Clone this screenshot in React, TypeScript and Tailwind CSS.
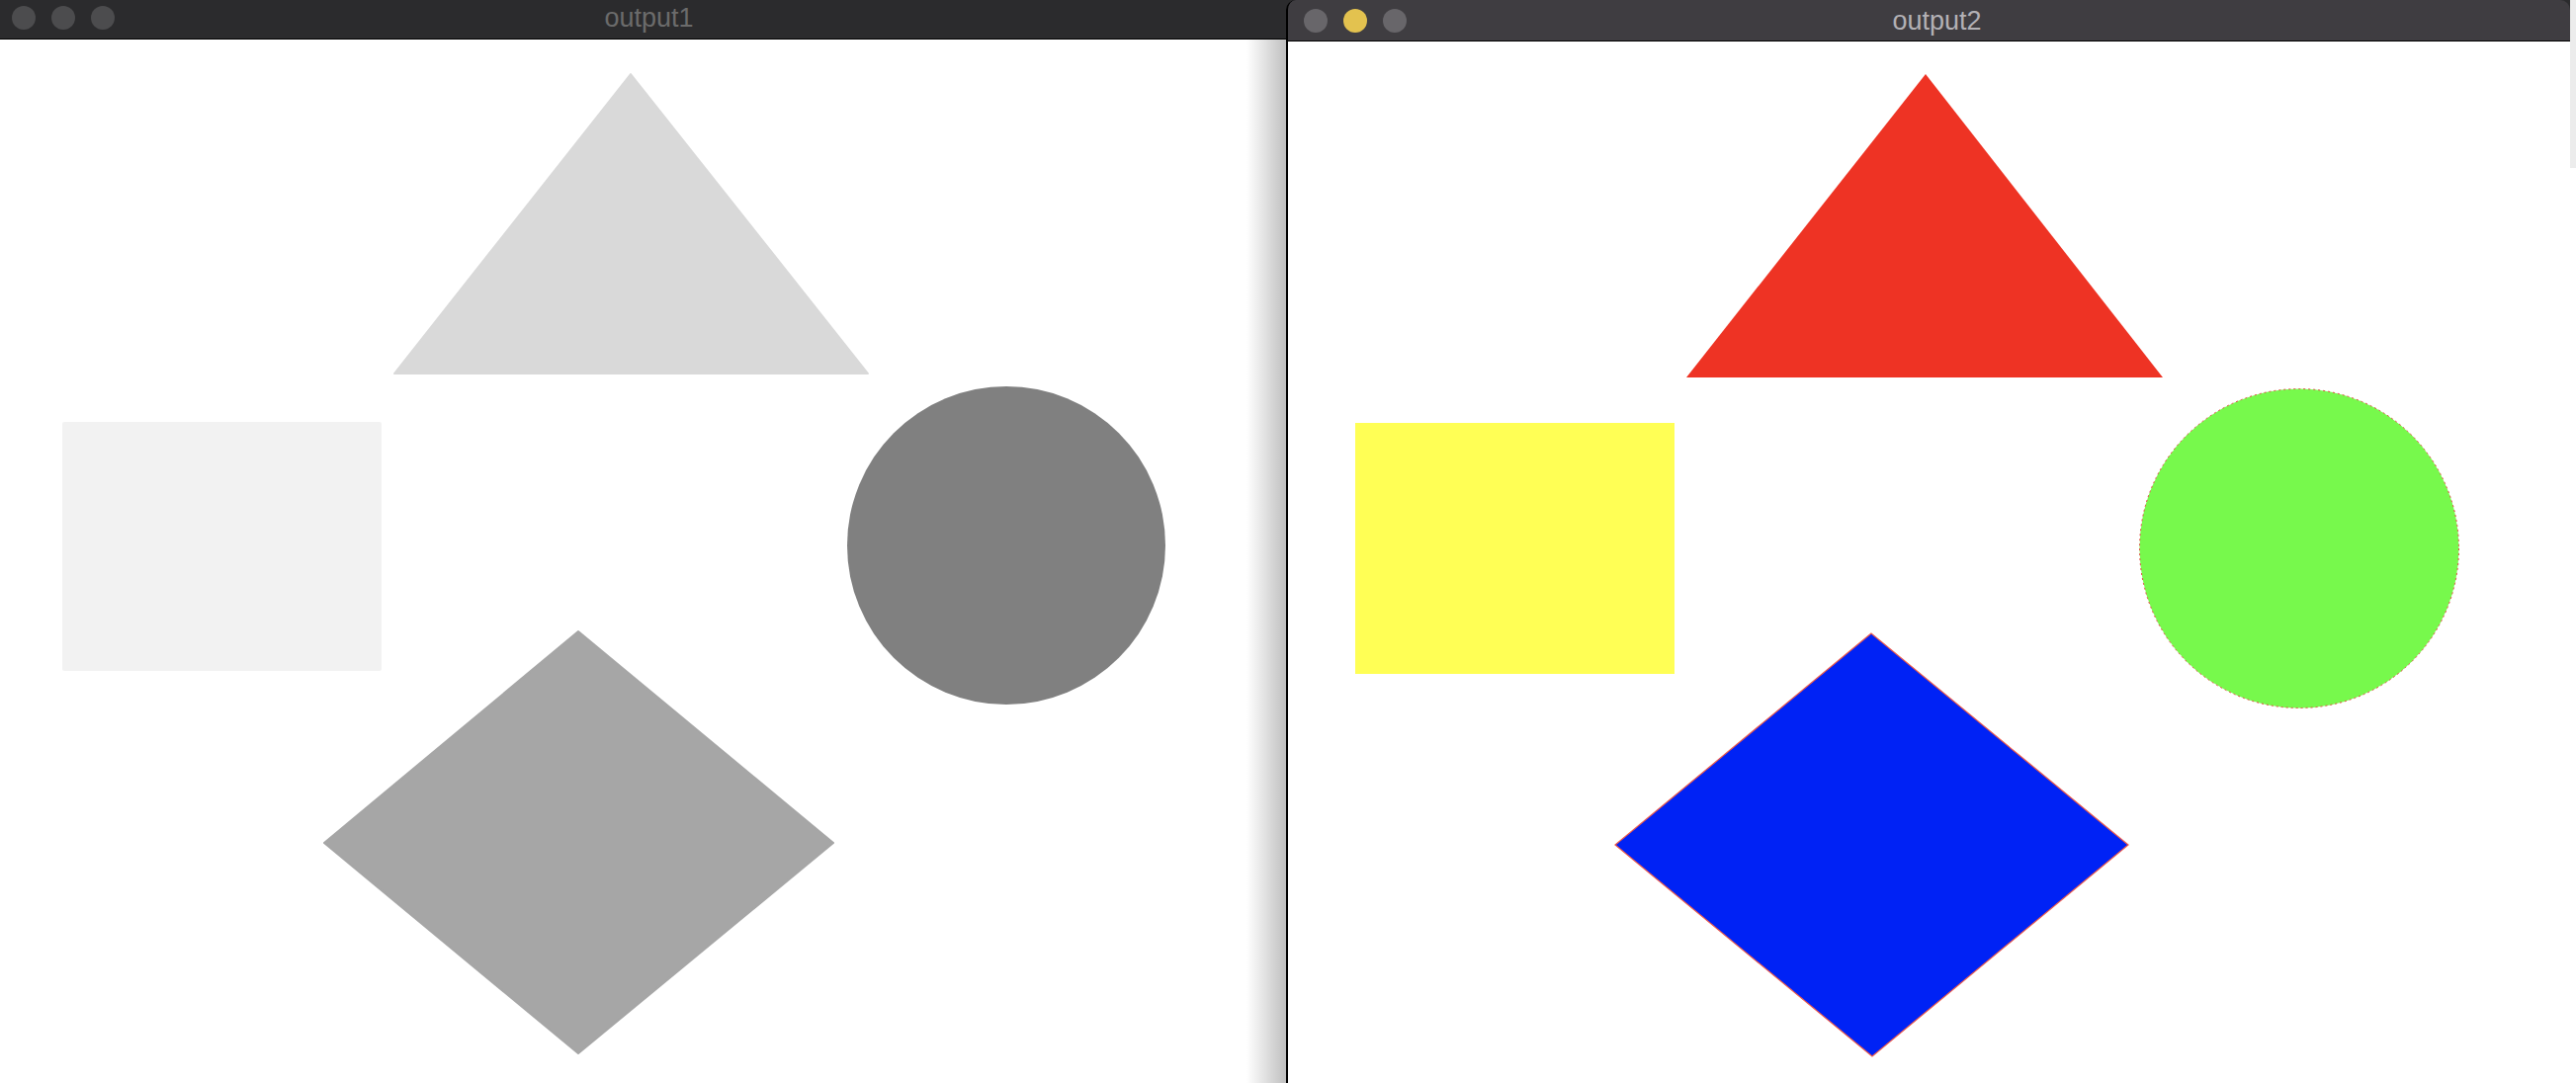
import React from "react";

function Lights({ colors }: { colors: string[] }) {
  return (
    <div className="flex items-center gap-[16px]">
      {colors.map((c, i) => (
        <div key={i} className={`w-[24px] h-[24px] rounded-full ${c}`} />
      ))}
    </div>
  );
}

export default function App() {
  return (
    <div
      className="flex w-[2606px] h-[1096px] overflow-hidden bg-[#2b2b2d]"
      style={{ fontFamily: '"Liberation Sans", Arial, sans-serif' }}
    >
      {/* Left window: output1 */}
      <div className="w-[1301px] shrink-0 flex flex-col">
        <div className="h-[40px] shrink-0 bg-[#2b2b2d] border-b border-black grid grid-cols-[1fr_auto_1fr] items-center pl-[12px] pb-[4px]">
          <Lights colors={["bg-[#4c4c4e]", "bg-[#4c4c4e]", "bg-[#4c4c4e]"]} />
          <div className="text-[27px] leading-none text-[#6b6b6b] pt-[2px]">output1</div>
          <div />
        </div>
        <div className="flex-1 relative bg-white">
          <svg width="1301" height="1056" viewBox="0 0 1301 1056" className="block">
            <polygon
              points="638,35 399,338 878,338"
              fill="#d9d9d9"
              stroke="#d9d9d9"
              strokeWidth="2"
              strokeLinejoin="round"
            />
            <rect x="63" y="387" width="323" height="252" rx="2" fill="#f2f2f2" />
            <circle cx="1018" cy="512" r="161" fill="#808080" />
            <polygon
              points="585,599 328,813 585,1026 843,813"
              fill="#a6a6a6"
              stroke="#a6a6a6"
              strokeWidth="2"
              strokeLinejoin="round"
            />
          </svg>
          <div className="absolute top-0 bottom-0 right-0 w-[40px] bg-gradient-to-r from-transparent to-black/25" />
        </div>
      </div>

      {/* Right window: output2 */}
      <div className="w-[1299px] shrink-0 flex flex-col border-l-2 border-black rounded-t-[10px] overflow-hidden">
        <div className="h-[42px] shrink-0 bg-[#3f3d41] border-b border-black grid grid-cols-[1fr_auto_1fr] items-center pl-[16px]">
          <Lights colors={["bg-[#68666a]", "bg-[#e3c24f]", "bg-[#68666a]"]} />
          <div className="text-[27px] leading-none text-[#b3b1b5] pt-[2px]">output2</div>
          <div />
        </div>
        <div className="flex-1 bg-white">
          <svg width="1297" height="1054" viewBox="0 0 1297 1054" className="block">
            <polygon points="645,33 403,340 885,340" fill="#ee3324" />
            <rect x="68" y="386" width="323" height="254" fill="#ffff55" />
            <circle cx="1023" cy="513" r="161.5" fill="#77f94c" stroke="#e0463c" strokeWidth="1" strokeDasharray="2 3" />
            <polygon
              points="590,599 331,813 591,1027 850,813"
              fill="#0022f5"
              stroke="#ee5a4a"
              strokeWidth="1.2"
              strokeLinejoin="miter"
            />
          </svg>
        </div>
      </div>

      {/* sliver of window behind */}
      <div className="flex-1 flex flex-col">
        <div className="h-[170px] bg-[#ececec]" />
        <div className="flex-1 bg-white" />
      </div>
    </div>
  );
}
